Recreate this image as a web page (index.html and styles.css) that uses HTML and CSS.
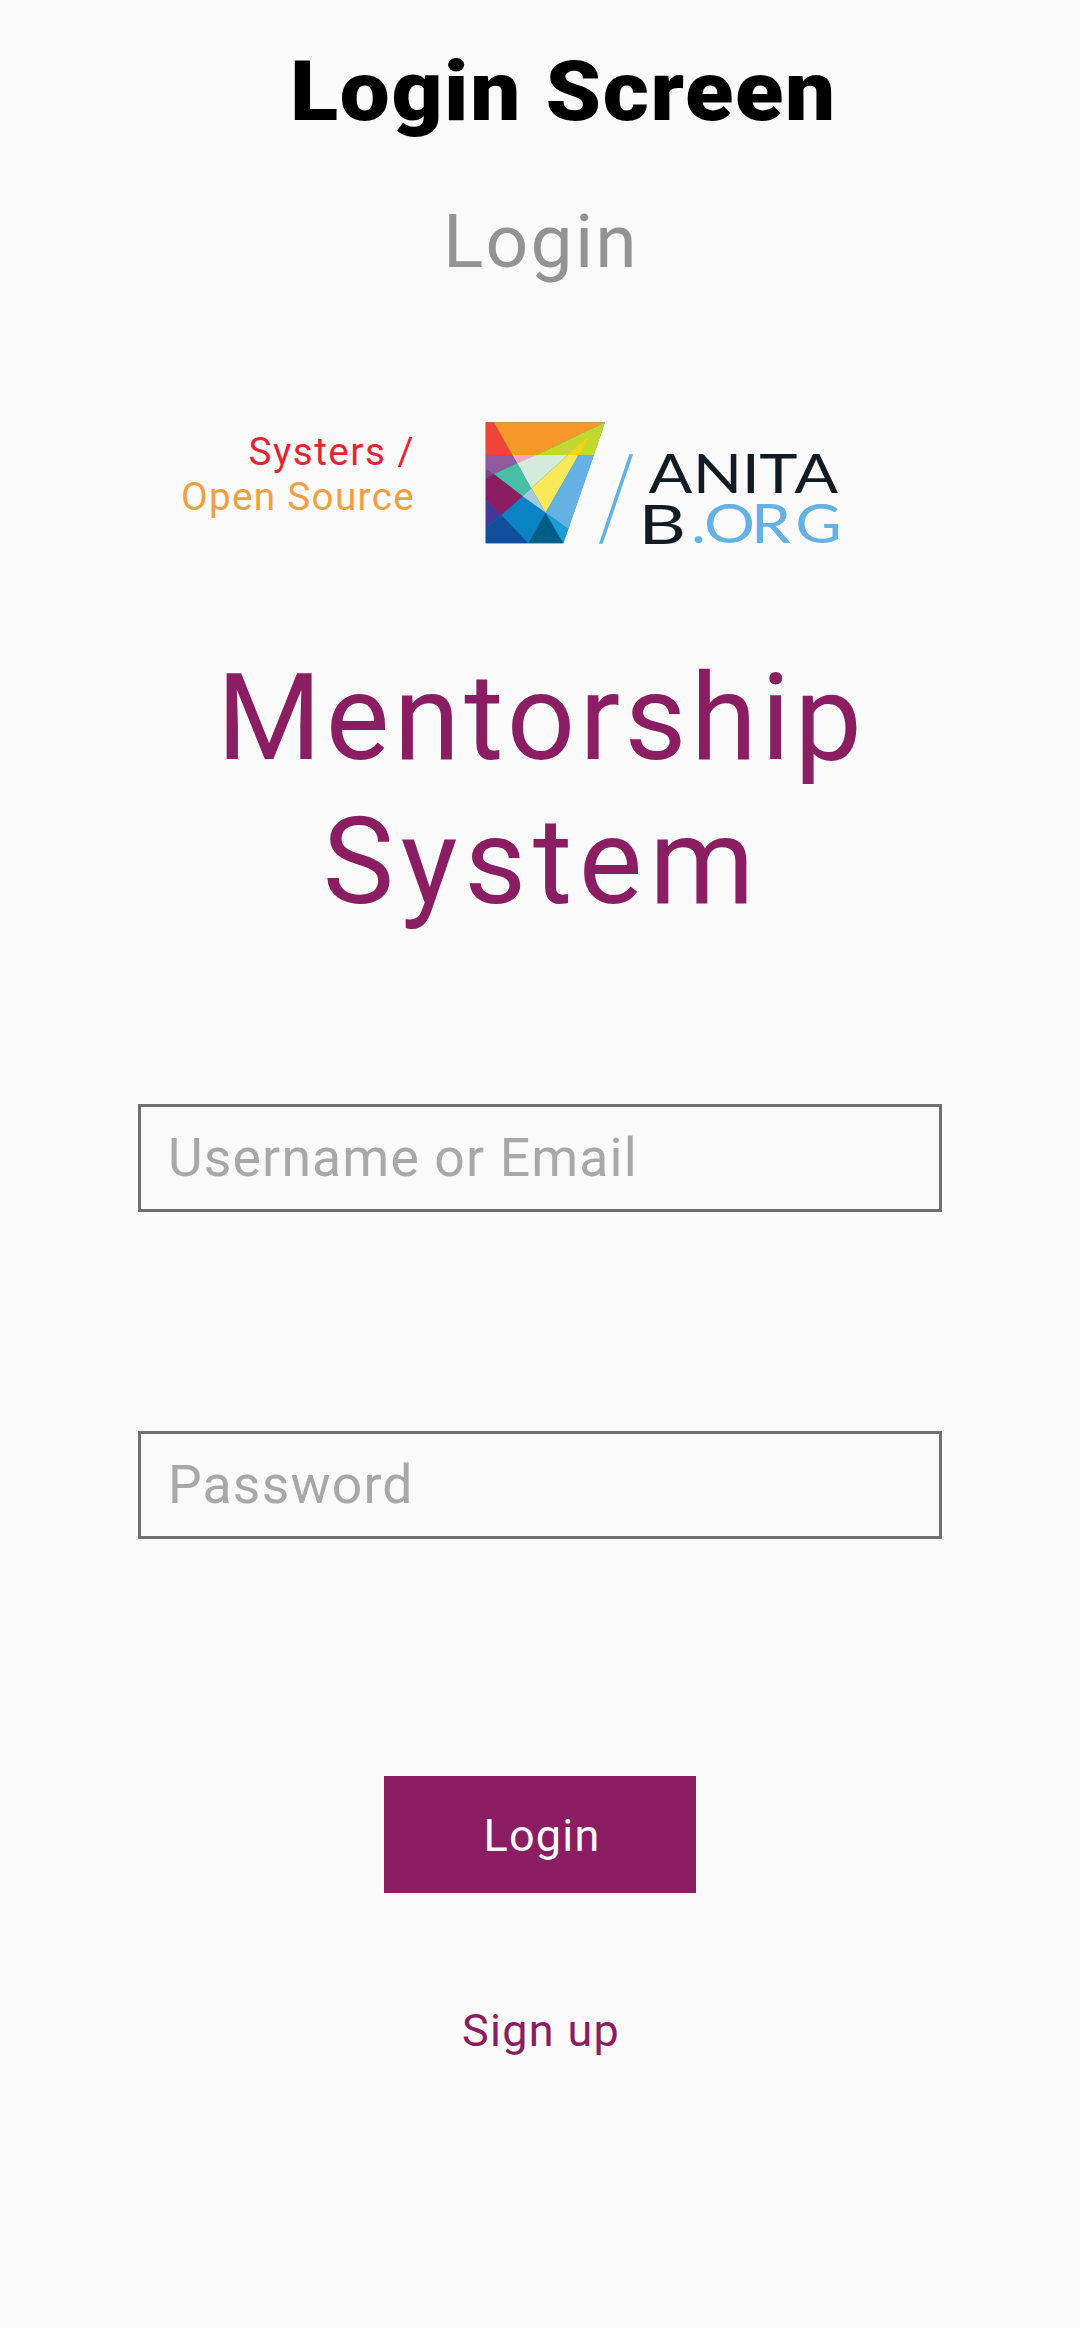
FILE: index.html
```html
<!DOCTYPE html>
<html lang="en">
<head>
<meta charset="utf-8">
<title>Login Screen</title>
<link rel="stylesheet" href="styles.css">
</head>
<body>
<main class="screen">
  <h2 class="screen-title">Login Screen</h2>
  <p class="screen-subtitle">Login</p>
  <div class="brand">
    <p class="brand-text"><span class="systers">Systers /</span><span class="open-source">Open Source</span></p>
    <svg class="brand-logo" viewBox="0 0 356 123" role="img" aria-label="AnitaB.org">
      <g transform="translate(-15 -12) scale(.33333)">
        <path fill="#0a83c3" d="M47 37H405L280 400H47z"/>
        <path fill="#f04438" d="M47 37H73L128 136H47z"/>
        <path fill="#f8982a" d="M72 37H405L200 135H127z"/>
        <path fill="#c1d82f" d="M405 37L372 135H200z"/>
        <path fill="#fdd20a" d="M356 80L326 135H293z"/>
        <path fill="#f5a3c7" d="M127 135H205L142 161z"/>
        <path fill="#8f5a9e" d="M47 135H127L142 160L72 193L47 177z"/>
        <path fill="#7b4484" d="M47 177L72 193L47 205z"/>
        <path fill="#48bea4" d="M72 193L142 160L184 235L158 259z"/>
        <path fill="#d3ebdb" d="M142 160L200 135H293L184 235z"/>
        <path fill="#f9e85a" d="M293 135H326L227 308L184 235z"/>
        <path fill="#a5cbdf" d="M184 235L227 308L158 259z"/>
        <path fill="#64b2e3" d="M326 135H372L295 357L227 308z"/>
        <path fill="#8b1d62" d="M72 193L158 259L94 315L47 268V205z"/>
        <path fill="#443795" d="M47 268L94 315L47 354z"/>
        <path fill="#10509b" d="M47 354L94 315L175 400H47z"/>
        <path fill="#005d87" d="M227 308L280 400H175z"/>
        <path fill="#1d9cd8" d="M227 308L295 357L280 400z"/>
      </g>
      <path fill="#64b2e3" d="M144.3 32.3H148L117.7 121.7H114z"/>
      <g class="wordmark">
        <text transform="scale(1.2 1)" y="71.3" x="136.2 173.2 214 228.6 257.8">ANITA</text>
        <text transform="translate(153.5 121.5) scale(1.36 1)">B</text>
        <text class="org" transform="scale(1.18 1)" y="121.5" x="174.6 185.6 225.5 263">.ORG</text>
      </g>
    </svg>
  </div>
  <h1 class="app-name"><span class="line-one">Mentorship</span><span class="line-two">System</span></h1>
  <form class="login-form">
    <input class="field" type="text" placeholder="Username or Email" aria-label="Username or Email">
    <input class="field" type="password" placeholder="Password" aria-label="Password">
    <button class="login-button" type="button">Login</button>
  </form>
  <a class="sign-up">Sign up</a>
</main>
</body>
</html>
```

FILE: styles.css
```css
* { box-sizing: border-box; margin: 0; }
body { background: #fafafa; font-family: Roboto, "Liberation Sans", sans-serif; }
.screen { width: 1080px; height: 2328px; padding-top: 43px; display: flex; flex-direction: column; align-items: center; overflow: hidden; }
.screen-title { font-size: 83px; line-height: 98px; font-weight: 900; letter-spacing: 1.5px; color: #000; margin-left: 46px; transform: scaleX(1.07); }
.screen-subtitle { margin-top: 56px; font-size: 75px; line-height: 88px; letter-spacing: 2.2px; color: #939393; padding-left: 2px; }
.brand { align-self: stretch; margin-top: 137px; height: 123px; display: flex; gap: 70px; padding-left: 175px; }
.brand-text { width: 240px; padding-top: 7px; font-size: 38.7px; line-height: 45px; display: flex; flex-direction: column; align-items: flex-end; white-space: nowrap; }
.systers { color: #e62533; letter-spacing: 1.5px; }
.open-source { color: #f09f41; letter-spacing: 1.3px; }
.brand-logo { width: 356px; height: 123px; overflow: visible; }
.wordmark { font-family: Lato, sans-serif; font-size: 54px; fill: #101b24; }
.org { fill: #64b2e3; }
.app-name { margin-top: 101px; font-size: 120px; line-height: 144px; font-weight: 400; color: #8b1d62; display: flex; flex-direction: column; align-items: center; }
.line-one { letter-spacing: 4.3px; padding-left: 3px; }
.line-two { letter-spacing: 6.7px; padding-left: 4px; }
.login-form { margin-top: 170px; display: flex; flex-direction: column; align-items: center; }
.field { width: 804px; height: 108px; border: 3px solid #707070; border-radius: 0; background: transparent; padding: 0 27px 2px; font: 400 53.5px Roboto, sans-serif; letter-spacing: 1.15px; outline: 0; }
.field::placeholder { color: #a8a8a8; opacity: 1; }
.field + .field { margin-top: 219px; }
.login-button { width: 312px; height: 117px; margin-top: 237px; padding: 2px 0 0 4px; border: 0; background: #8b1d62; color: #fafafa; font: 400 45px Roboto, sans-serif; letter-spacing: 1.2px; }
.sign-up { margin-top: 111px; font-size: 45px; line-height: 54px; letter-spacing: 1.3px; color: #8b1d62; padding-left: 2px; }
```
